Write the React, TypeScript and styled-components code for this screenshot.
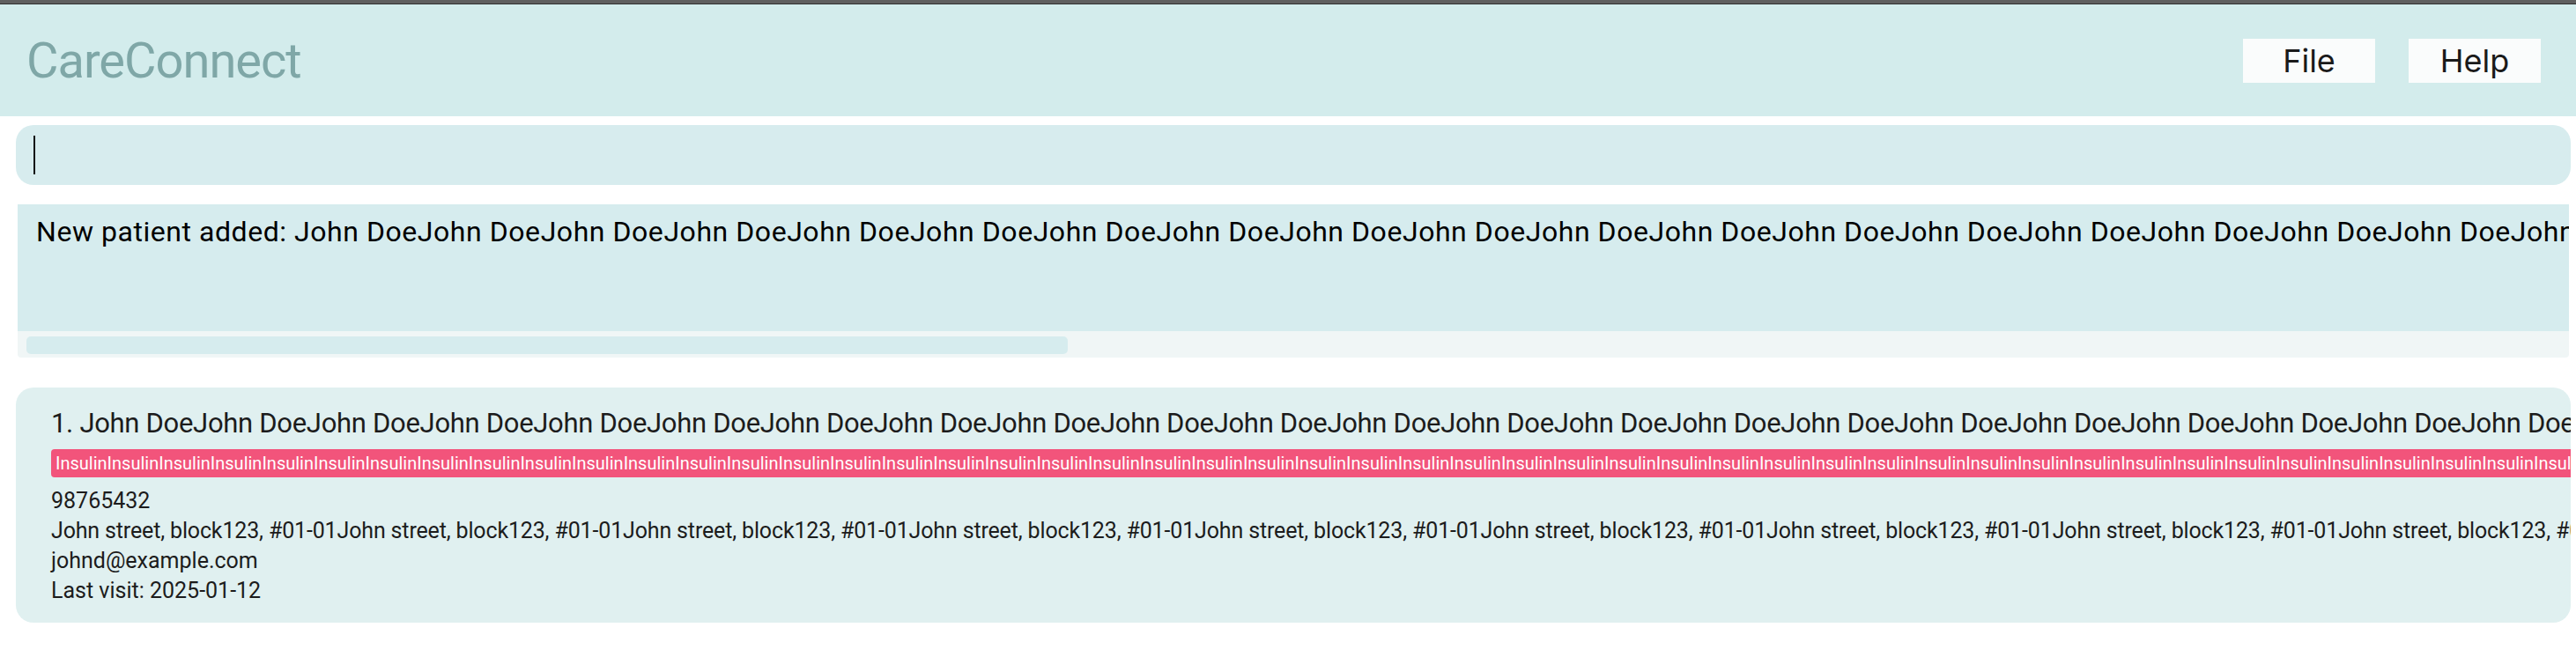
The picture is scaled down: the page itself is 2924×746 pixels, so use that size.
import React from "react";
import styled, { createGlobalStyle } from "styled-components";

const Global = createGlobalStyle`
  html, body { margin: 0; padding: 0; background: #ffffff; }
  body { font-family: Roboto, Inter, "Liberation Sans", sans-serif; }
  * { box-sizing: border-box; }
`;

const Page = styled.div`
  width: 2924px;
  height: 746px;
  overflow: hidden;
  display: flex;
  flex-direction: column;
`;

const TopStrip = styled.div`
  height: 5px;
  background: #5f5f5f;
  border-bottom: 1px solid #2f2f2f;
  flex: none;
`;

const Header = styled.header`
  height: 127px;
  flex: none;
  background: #d3ecec;
  display: flex;
  align-items: center;
  justify-content: space-between;
  padding: 0 40px 0 30px;
`;

const Brand = styled.div`
  font-size: 56px;
  color: #7fa7a7;
  letter-spacing: -1px;
`;

const Menu = styled.nav`
  display: flex;
  gap: 38px;
`;

const MenuButton = styled.button`
  width: 150px;
  height: 50px;
  border: none;
  background: #fafcfc;
  color: #1a1a1a;
  font-family: Inter, "Liberation Sans", sans-serif;
  font-size: 36px;
  padding: 0;
  line-height: 50px;
`;

const CommandBox = styled.div`
  margin: 10px 6px 0 18px;
  height: 68px;
  flex: none;
  background: #d7ecee;
  border-radius: 20px;
  display: flex;
  align-items: center;
  padding-left: 20px;
`;

const Caret = styled.span`
  width: 2px;
  height: 44px;
  background: #111;
`;

const ResultBox = styled.section`
  margin: 22px 8px 0 20px;
  height: 174px;
  flex: none;
  display: flex;
  flex-direction: column;
  border-radius: 0 0 4px 4px;
  overflow: hidden;
`;

const ResultText = styled.div`
  height: 144px;
  background: #d6ecee;
  padding: 12px 0 0 21px;
  font-size: 32px;
  color: #000;
  white-space: nowrap;
  overflow: hidden;
  line-height: 1.2;
  letter-spacing: 0.55px;
`;

const Track = styled.div`
  height: 30px;
  background: #f0f6f6;
  padding: 6px 0 0 10px;
`;

const Thumb = styled.div`
  height: 20px;
  width: 1182px;
  background: #d6ecee;
  border-radius: 5px;
`;

const Card = styled.article`
  margin: 34px 6px 0 18px;
  height: 267px;
  flex: none;
  background: #e0f0f0;
  border-radius: 20px;
  overflow: hidden;
  padding: 22px 0 0 40px;
  display: flex;
  flex-direction: column;
  align-items: flex-start;
`;

const Title = styled.div`
  font-size: 31px;
  color: #1c1c1c;
  white-space: nowrap;
  line-height: 1.21;
  letter-spacing: -0.3px;
`;

const Tag = styled.div`
  margin-top: 10px;
  height: 32px;
  line-height: 32px;
  background: #f2547b;
  color: #ffffff;
  font-size: 20px;
  border-radius: 4px;
  padding: 0 5px;
  white-space: nowrap;
`;

const Details = styled.div`
  margin-top: 10px;
  font-size: 25px;
  line-height: 34px;
  color: #1c1c1c;
  white-space: nowrap;
`;

const Address = styled.div`
  letter-spacing: -0.15px;
`;

const rep = (s: string, n: number) => Array.from({ length: n }, () => s).join("");

export default function App() {
  return (
    <>
      <Global />
      <Page>
        <TopStrip />
        <Header>
          <Brand>CareConnect</Brand>
          <Menu>
            <MenuButton>File</MenuButton>
            <MenuButton>Help</MenuButton>
          </Menu>
        </Header>
        <CommandBox>
          <Caret />
        </CommandBox>
        <ResultBox>
          <ResultText>New patient added: {rep("John Doe", 40)}</ResultText>
          <Track>
            <Thumb />
          </Track>
        </ResultBox>
        <Card>
          <Title>1. {rep("John Doe", 40)}</Title>
          <Tag>{rep("Insulin", 120)}</Tag>
          <Details>
            <div>98765432</div>
            <Address>{rep("John street, block123, #01-01", 20)}</Address>
            <div>johnd@example.com</div>
            <div>Last visit: 2025-01-12</div>
          </Details>
        </Card>
      </Page>
    </>
  );
}
